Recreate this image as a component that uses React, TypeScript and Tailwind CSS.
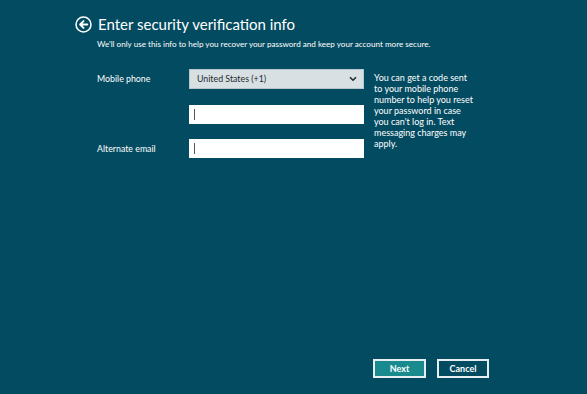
export default function App() {
  return (
    <div className="flex h-[394px] w-full flex-col bg-[#034b61] font-['Lato',sans-serif] text-white">
      {/* Header */}
      <div className="flex items-center gap-[6px] pl-[75px] pt-[15px]">
        <svg width="17" height="17" viewBox="0 0 20 20" fill="none">
          <circle cx="10" cy="10" r="8.8" stroke="white" strokeWidth="1.8" />
          <path d="M14.5 10H6.5M10 6L6 10L10 14" stroke="white" strokeWidth="2.2" strokeLinecap="round" strokeLinejoin="round" />
        </svg>
        <h1 className="text-[15px] leading-[18px]">Enter security verification info</h1>
      </div>
      <p className="pl-[97px] pt-[5px] text-[8.1px] leading-[12px]">
        We'll only use this info to help you recover your password and keep your account more secure.
      </p>

      {/* Form */}
      <div className="mt-[19px] grid grid-cols-[92px_175px_110px] pl-[97px] text-[8.8px]">
        <div className="flex h-[20px] items-center">Mobile phone</div>
        <div className="flex h-[20px] items-center justify-between border border-[#b9c6cb] bg-[#d8e0e3] pl-[7px] pr-[6px] text-[#1f2a30]">
          <span>United States (+1)</span>
          <svg width="8" height="6" viewBox="0 0 8 6" fill="none">
            <path d="M1 1.2L4 4.2L7 1.2" stroke="#1f2a30" strokeWidth="1.6" />
          </svg>
        </div>
        <p className="row-span-3 ml-[10px] mt-[3px] text-[9px] leading-[11px]">
          You can get a code sent to your mobile phone number to help you reset your password in case you can't log in. Text messaging charges may apply.
        </p>

        <div />
        <div className="mt-[16px] flex h-[19px] items-center bg-white pl-[5px]">
          <div className="h-[11px] w-px bg-[#555]" />
        </div>

        <div className="mt-[15px] flex h-[19px] items-center">Alternate email</div>
        <div className="mt-[15px] flex h-[19px] items-center bg-white pl-[5px]">
          <div className="h-[11px] w-px bg-[#555]" />
        </div>
      </div>

      {/* Buttons */}
      <div className="mt-auto flex justify-end gap-[11px] pb-[16px] pr-[98px] text-[9px] font-bold">
        <button className="h-[19px] w-[53px] border-2 border-[#e6eef0] bg-[#198b8f]">Next</button>
        <button className="h-[19px] w-[52px] border-2 border-[#e6eef0] bg-[#034b61]">Cancel</button>
      </div>
    </div>
  );
}
